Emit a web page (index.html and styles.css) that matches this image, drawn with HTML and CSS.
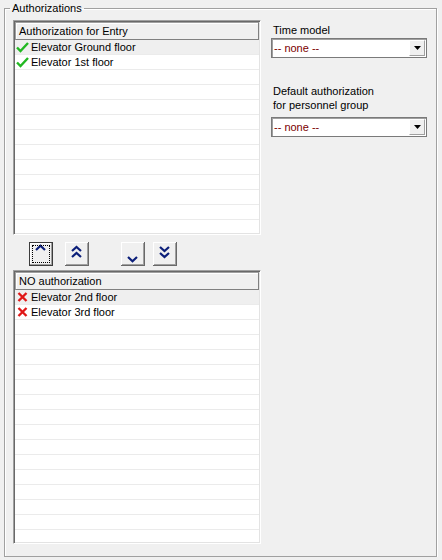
FILE: index.html
```html
<!DOCTYPE html>
<html lang="en">
<head>
    <meta charset="UTF-8">
    <title>Authorizations</title>
    <link rel="stylesheet" href="styles.css">
</head>
<body>
    <fieldset class="group">
        <legend>Authorizations</legend>
        <div class="layout">
            <div class="lists">
                <div class="list list-top">
                    <div class="list-head">Authorization for Entry</div>
                    <div class="list-body">
                        <div class="row row-sel">
                            <svg class="icon" width="13" height="12" viewBox="0 0 13 12"><path d="M1 6.5 L4.5 10 L12 2" fill="none" stroke="#22b822" stroke-width="2.4"/></svg>
                            Elevator Ground floor
                        </div>
                        <div class="row">
                            <svg class="icon" width="13" height="12" viewBox="0 0 13 12"><path d="M1 6.5 L4.5 10 L12 2" fill="none" stroke="#22b822" stroke-width="2.4"/></svg>
                            Elevator 1st floor
                        </div>
                    </div>
                </div>

                <div class="movers">
                    <button class="mover mover-default" title="Up">
                        <svg width="24" height="24" viewBox="0 0 24 24"><path d="M7 8 L11.5 3.8 L16 8" /></svg>
                    </button>
                    <button class="mover" title="All up">
                        <svg width="24" height="24" viewBox="0 0 24 24"><path d="M7 9 L11.5 5 L16 9 M7 15 L11.5 11 L16 15" /></svg>
                    </button>
                    <button class="mover mover-gap" title="Down">
                        <svg width="24" height="24" viewBox="0 0 24 24"><path d="M7 15 L11.5 19.2 L16 15" /></svg>
                    </button>
                    <button class="mover" title="All down">
                        <svg width="24" height="24" viewBox="0 0 24 24"><path d="M7 5 L11.5 9 L16 5 M7 11 L11.5 15 L16 11" /></svg>
                    </button>
                </div>

                <div class="list list-bottom">
                    <div class="list-head">NO authorization</div>
                    <div class="list-body">
                        <div class="row row-sel">
                            <svg class="icon" width="13" height="12" viewBox="0 0 13 12"><path d="M2.5 2 L10.5 10 M10.5 2 L2.5 10" fill="none" stroke="#e01818" stroke-width="2.4"/></svg>
                            Elevator 2nd floor
                        </div>
                        <div class="row">
                            <svg class="icon" width="13" height="12" viewBox="0 0 13 12"><path d="M2.5 2 L10.5 10 M10.5 2 L2.5 10" fill="none" stroke="#e01818" stroke-width="2.4"/></svg>
                            Elevator 3rd floor
                        </div>
                    </div>
                </div>
            </div>

            <div class="side">
                <div class="field-label">Time model</div>
                <div class="combo">
                    <span class="combo-text">-- none --</span>
                    <span class="combo-btn"><svg width="7" height="4" viewBox="0 0 7 4"><path d="M0 0 H7 L3.5 4 Z" fill="#000"/></svg></span>
                </div>

                <div class="field-label field-label-gap">Default authorization<br>for personnel group</div>
                <div class="combo">
                    <span class="combo-text">-- none --</span>
                    <span class="combo-btn"><svg width="7" height="4" viewBox="0 0 7 4"><path d="M0 0 H7 L3.5 4 Z" fill="#000"/></svg></span>
                </div>
            </div>
        </div>
    </fieldset>
</body>
</html>
```

FILE: styles.css
```css
body {
    margin: 0;
    background-color: #f0f0f0;
    font-family: 'Liberation Sans', Arial, sans-serif;
    font-size: 11px;
    color: #000;
}

.group {
    box-sizing: border-box;
    width: 433px;
    height: 556px;
    margin: 1px 0 0 4px;
    padding: 5px 0 0 8px;
    border: 1px solid #a0a0a0;
    box-shadow: 1px 1px 0 #fff, inset 1px 1px 0 #fff;
}

.group legend {
    margin-left: -3px;
    padding: 0 2px;
    line-height: 14px;
}

.layout {
    display: flex;
    align-items: flex-start;
}

.lists {
    width: 248px;
    display: flex;
    flex-direction: column;
}

/* list boxes */
.list {
    box-sizing: border-box;
    display: flex;
    flex-direction: column;
    padding: 1px;
    border: 1px solid;
    border-color: #a0a0a0 #fff #fff #a0a0a0;
    box-shadow: inset 1px 1px 0 #696969, inset -1px -1px 0 #e3e3e3;
    background: #fff;
}

.list-top {
    height: 215px;
}

.list-bottom {
    height: 274px;
}

.list-head {
    box-sizing: border-box;
    height: 18px;
    line-height: 16px;
    padding-left: 3px;
    background: #f0f0f0;
    border: 1px solid #a0a0a0;
    border-right-color: #808080;
    border-bottom-color: #808080;
    box-shadow: inset 1px 1px 0 #fff;
}

.list-body {
    flex: 1;
    background: repeating-linear-gradient(to bottom, #fff 0, #fff 14px, #ebebeb 14px, #ebebeb 15px);
}

.row {
    box-sizing: border-box;
    height: 15px;
    display: flex;
    align-items: center;
    border-bottom: 1px solid #ebebeb;
    white-space: nowrap;
}

.row-sel {
    background: #efefef;
}

.icon {
    margin: 0 2px 0 1px;
    flex-shrink: 0;
}

/* move buttons */
.movers {
    display: flex;
    padding: 7px 0 4px 16px;
}

.mover {
    box-sizing: border-box;
    width: 24px;
    height: 24px;
    padding: 0;
    margin-right: 12px;
    border: none;
    background: #f0f0f0;
    box-shadow: inset -1px -1px 0 #696969, inset 1px 1px 0 #fff, inset -2px -2px 0 #a0a0a0;
}

.mover svg {
    display: block;
}

.mover path {
    fill: none;
    stroke: #0c1f7a;
    stroke-width: 2.2;
}

.mover-default {
    box-shadow: inset 0 0 0 1px #3c3c3c, inset -2px -2px 0 #a0a0a0, inset 2px 2px 0 #fff;
    outline: 1px dotted #000;
    outline-offset: -4px;
}

.mover-gap {
    margin-left: 20px;
    margin-right: 8px;
}

/* right column */
.side {
    width: 156px;
    margin-left: 10px;
}

.field-label {
    line-height: 14px;
    margin: 3px 0 1px 2px;
}

.field-label-gap {
    margin-top: 26px;
    margin-bottom: 5px;
}

.combo {
    box-sizing: border-box;
    height: 20px;
    display: flex;
    align-items: center;
    justify-content: space-between;
    background: #fff;
    border: 1px solid #7a7a7a;
    box-shadow: inset 1px 1px 0 #a0a0a0;
}

.combo-text {
    color: #7b0000;
    padding-left: 2px;
}

.combo-btn {
    box-sizing: border-box;
    width: 16px;
    height: 16px;
    margin-right: 1px;
    display: flex;
    align-items: center;
    justify-content: center;
    background: #f0f0f0;
    border: 1px solid;
    border-color: #fff #a0a0a0 #a0a0a0 #fff;
}
```
